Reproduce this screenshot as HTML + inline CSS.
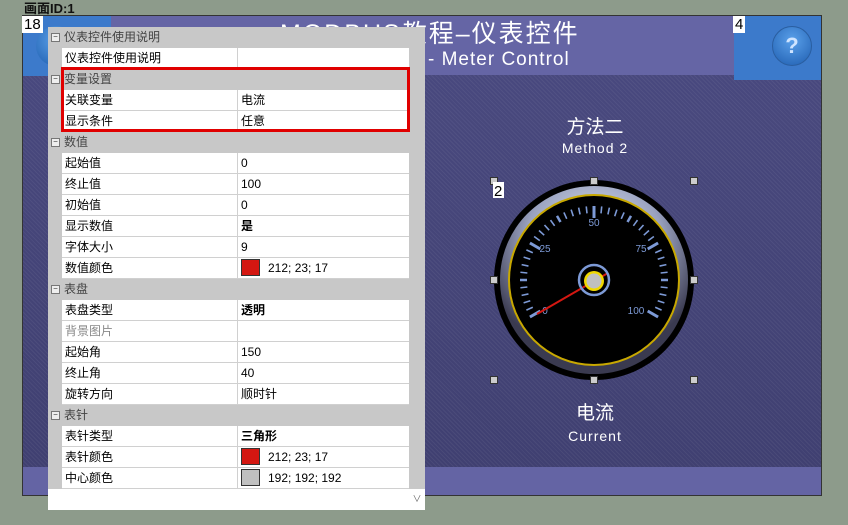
<!DOCTYPE html>
<html><head><meta charset="utf-8"><style>
body{margin:0;width:848px;height:525px;background:#8d9b8b;position:relative;overflow:hidden;font-family:"Liberation Sans","Noto Sans CJK SC",sans-serif}
.abs{position:absolute}
.grid{position:absolute;left:48px;top:27px;width:377px;height:483px;background:#fff}
.row{position:absolute;left:0;width:361px;height:21px;font-size:12px;line-height:21px}
.g{background:#c8c8c8;color:#444}
.g .t{position:absolute;left:16px}
.g .m{position:absolute;left:3px;top:6px;width:7px;height:7px;border:1px solid #777;background:#eee;font-size:8px;line-height:6px;text-align:center;color:#333}
.r{background:#fff;border-bottom:1px solid #d0d0d0;box-sizing:border-box}
.r .k{position:absolute;left:17px;color:#000}
.r .v{position:absolute;left:193px;color:#000}
.r .sep{position:absolute;left:189px;top:0;width:1px;height:21px;background:#d0d0d0}
.r .gut{position:absolute;left:0;top:-1px;width:14px;height:22px;background:#c8c8c8}
.sw{display:inline-block;width:17px;height:15px;border:1px solid #333;vertical-align:-4px;margin-right:8px}
</style></head><body>
<div class="abs" style="left:24px;top:0;font-size:13px;color:#111;font-weight:bold;line-height:17px">画面ID:1</div>
<div class="abs" style="left:22px;top:15px;width:800px;height:481px;background:#474779;border:1px solid #333;box-sizing:border-box;
background-image:repeating-linear-gradient(45deg,rgba(255,255,255,.05) 0 1px,transparent 1px 3px),linear-gradient(#4a4a80,#3f3f70)"></div>
<div class="abs" style="left:23px;top:16px;width:798px;height:59px;background:#6565a5"></div>
<div class="abs" style="left:23px;top:467px;width:798px;height:28px;background:#6464a4"></div>
<div class="abs" style="left:23px;top:16px;width:88px;height:60px;background:#3c7acb"></div>
<div class="abs" style="left:36px;top:26px;width:40px;height:40px;border-radius:50%;background:radial-gradient(circle at 50% 35%,#5aa0e8,#1f5fb0)"></div>
<div class="abs" style="left:734px;top:16px;width:87px;height:64px;background:#3c7acb"></div>
<div class="abs" style="left:772px;top:26px;width:38px;height:38px;border-radius:50%;background:radial-gradient(circle at 50% 35%,#5aa0ea,#1f5eb0);border:1px solid #2a5ea0;color:#cfe4ff;font-weight:bold;font-size:22px;line-height:38px;text-align:center">?</div>
<div class="abs" style="left:733px;top:16px;background:#fff;font-size:15px;line-height:17px;padding:0 2px">4</div>
<div class="abs" style="left:22px;top:16px;background:#fff;font-size:15px;line-height:17px;padding:0 2px">18</div>
<div class="abs" style="left:280px;top:18px;color:#fff;font-size:25px;line-height:32px;letter-spacing:2px">MODBUS教程–仪表控件</div>
<div class="abs" style="left:428px;top:49px;color:#fff;font-size:19px;line-height:22px;letter-spacing:1px">- Meter Control</div>
<div class="abs" style="left:520px;top:112px;width:150px;text-align:center;color:#fff;font-size:19px">方法二</div>
<div class="abs" style="left:520px;top:140px;width:150px;text-align:center;color:#fff;font-size:14px;letter-spacing:1px">Method 2</div>
<div class="abs" style="left:520px;top:398px;width:150px;text-align:center;color:#fff;font-size:19px">电流</div>
<div class="abs" style="left:520px;top:428px;width:150px;text-align:center;color:#fff;font-size:14px;letter-spacing:1px">Current</div>
<svg class="abs" style="left:0;top:0" width="848" height="525">
<defs><radialGradient id="bz" cx="50%" cy="30%" r="60%"><stop offset="0" stop-color="#e8eef8"/><stop offset=".6" stop-color="#9aa2c0"/><stop offset="1" stop-color="#3a3a50"/></radialGradient></defs>
<circle cx="594" cy="280" r="100" fill="#000"/>
<circle cx="594" cy="280" r="94" fill="url(#bz)"/>
<circle cx="594" cy="280" r="86" fill="#c8a800"/>
<circle cx="594" cy="280" r="84" fill="#000"/>
<g transform="translate(594 280)" stroke="#7d9ad6" stroke-width="1.6">
<g id="t">
<line x1="74" x2="62" transform="rotate(150)" stroke-width="3"/><line x1="74" x2="67" transform="rotate(156)"/><line x1="74" x2="67" transform="rotate(162)"/><line x1="74" x2="67" transform="rotate(168)"/><line x1="74" x2="67" transform="rotate(174)"/><line x1="74" x2="67" transform="rotate(180)" stroke-width="2.5"/><line x1="74" x2="67" transform="rotate(186)"/><line x1="74" x2="67" transform="rotate(192)"/><line x1="74" x2="67" transform="rotate(198)"/><line x1="74" x2="67" transform="rotate(204)"/>
<line x1="74" x2="62" transform="rotate(210)" stroke-width="3"/><line x1="74" x2="67" transform="rotate(216)"/><line x1="74" x2="67" transform="rotate(222)"/><line x1="74" x2="67" transform="rotate(228)"/><line x1="74" x2="67" transform="rotate(234)"/><line x1="74" x2="67" transform="rotate(240)" stroke-width="2.5"/><line x1="74" x2="67" transform="rotate(246)"/><line x1="74" x2="67" transform="rotate(252)"/><line x1="74" x2="67" transform="rotate(258)"/><line x1="74" x2="67" transform="rotate(264)"/>
<line x1="74" x2="62" transform="rotate(270)" stroke-width="3"/><line x1="74" x2="67" transform="rotate(276)"/><line x1="74" x2="67" transform="rotate(282)"/><line x1="74" x2="67" transform="rotate(288)"/><line x1="74" x2="67" transform="rotate(294)"/><line x1="74" x2="67" transform="rotate(300)" stroke-width="2.5"/><line x1="74" x2="67" transform="rotate(306)"/><line x1="74" x2="67" transform="rotate(312)"/><line x1="74" x2="67" transform="rotate(318)"/><line x1="74" x2="67" transform="rotate(324)"/>
<line x1="74" x2="62" transform="rotate(330)" stroke-width="3"/><line x1="74" x2="67" transform="rotate(336)"/><line x1="74" x2="67" transform="rotate(342)"/><line x1="74" x2="67" transform="rotate(348)"/><line x1="74" x2="67" transform="rotate(354)"/><line x1="74" x2="67" transform="rotate(360)" stroke-width="2.5"/><line x1="74" x2="67" transform="rotate(366)"/><line x1="74" x2="67" transform="rotate(372)"/><line x1="74" x2="67" transform="rotate(378)"/><line x1="74" x2="67" transform="rotate(384)"/>
<line x1="74" x2="62" transform="rotate(390)" stroke-width="3"/>
</g></g>
<g fill="#7d9ad6" font-size="10" font-family="Liberation Sans" text-anchor="middle">
<text x="545" y="314">0</text><text x="545" y="252">25</text><text x="594" y="226">50</text><text x="641" y="252">75</text><text x="636" y="314">100</text></g>
<line x1="537" y1="314" x2="608" y2="273" stroke="#d41711" stroke-width="2"/>
<circle cx="594" cy="280" r="15" fill="none" stroke="#7d9ad6" stroke-width="2.5"/>
<circle cx="594" cy="281" r="10" fill="#f0d800"/>
<circle cx="594" cy="281" r="7.5" fill="#c0c0c0"/>
<g fill="#ccc" stroke="#333" stroke-width="1">
<rect x="490.5" y="177.5" width="7" height="7"/><rect x="590.5" y="177.5" width="7" height="7"/><rect x="690.5" y="177.5" width="7" height="7"/>
<rect x="490.5" y="276.5" width="7" height="7"/><rect x="690.5" y="276.5" width="7" height="7"/>
<rect x="490.5" y="376.5" width="7" height="7"/><rect x="590.5" y="376.5" width="7" height="7"/><rect x="690.5" y="376.5" width="7" height="7"/></g>
<rect x="493" y="182" width="11" height="16" fill="#fff"/><text x="494" y="196" font-size="15" font-family="Liberation Sans">2</text>
</svg>
<div class="grid">
<div class="abs" style="left:361px;top:0;width:16px;height:483px;background:#c8c8c8"></div>
<div class="abs" style="left:361px;top:462px;width:16px;height:21px;background:#fff;color:#666;font-size:9px;text-align:center;line-height:21px">∨</div>
<div class="row g" style="top:0"><span class="m">−</span><span class="t">仪表控件使用说明</span></div>
<div class="row r" style="top:21px"><span class="gut"></span><span class="k">仪表控件使用说明</span><span class="sep"></span></div>
<div class="row g" style="top:42px"><span class="m">−</span><span class="t">变量设置</span></div>
<div class="row r" style="top:63px"><span class="gut"></span><span class="k">关联变量</span><span class="sep"></span><span class="v">电流</span></div>
<div class="row r" style="top:84px"><span class="gut"></span><span class="k">显示条件</span><span class="sep"></span><span class="v">任意</span></div>
<div class="row g" style="top:105px"><span class="m">−</span><span class="t">数值</span></div>
<div class="row r" style="top:126px"><span class="gut"></span><span class="k">起始值</span><span class="sep"></span><span class="v">0</span></div>
<div class="row r" style="top:147px"><span class="gut"></span><span class="k">终止值</span><span class="sep"></span><span class="v">100</span></div>
<div class="row r" style="top:168px"><span class="gut"></span><span class="k">初始值</span><span class="sep"></span><span class="v">0</span></div>
<div class="row r" style="top:189px"><span class="gut"></span><span class="k">显示数值</span><span class="sep"></span><span class="v" style="font-weight:bold">是</span></div>
<div class="row r" style="top:210px"><span class="gut"></span><span class="k">字体大小</span><span class="sep"></span><span class="v">9</span></div>
<div class="row r" style="top:231px"><span class="gut"></span><span class="k">数值颜色</span><span class="sep"></span><span class="v"><span class="sw" style="background:#d41711"></span>212; 23; 17</span></div>
<div class="row g" style="top:252px"><span class="m">−</span><span class="t">表盘</span></div>
<div class="row r" style="top:273px"><span class="gut"></span><span class="k">表盘类型</span><span class="sep"></span><span class="v" style="font-weight:bold">透明</span></div>
<div class="row r" style="top:294px"><span class="gut"></span><span class="k" style="color:#888">背景图片</span><span class="sep"></span></div>
<div class="row r" style="top:315px"><span class="gut"></span><span class="k">起始角</span><span class="sep"></span><span class="v">150</span></div>
<div class="row r" style="top:336px"><span class="gut"></span><span class="k">终止角</span><span class="sep"></span><span class="v">40</span></div>
<div class="row r" style="top:357px"><span class="gut"></span><span class="k">旋转方向</span><span class="sep"></span><span class="v">顺时针</span></div>
<div class="row g" style="top:378px"><span class="m">−</span><span class="t">表针</span></div>
<div class="row r" style="top:399px"><span class="gut"></span><span class="k">表针类型</span><span class="sep"></span><span class="v" style="font-weight:bold">三角形</span></div>
<div class="row r" style="top:420px"><span class="gut"></span><span class="k">表针颜色</span><span class="sep"></span><span class="v"><span class="sw" style="background:#d41711"></span>212; 23; 17</span></div>
<div class="row r" style="top:441px"><span class="gut"></span><span class="k">中心颜色</span><span class="sep"></span><span class="v"><span class="sw" style="background:#c0c0c0"></span>192; 192; 192</span></div>
<div class="abs" style="left:13px;top:40px;width:349px;height:65px;border:3px solid #e00000;box-sizing:border-box"></div>
</div>
</body></html>
